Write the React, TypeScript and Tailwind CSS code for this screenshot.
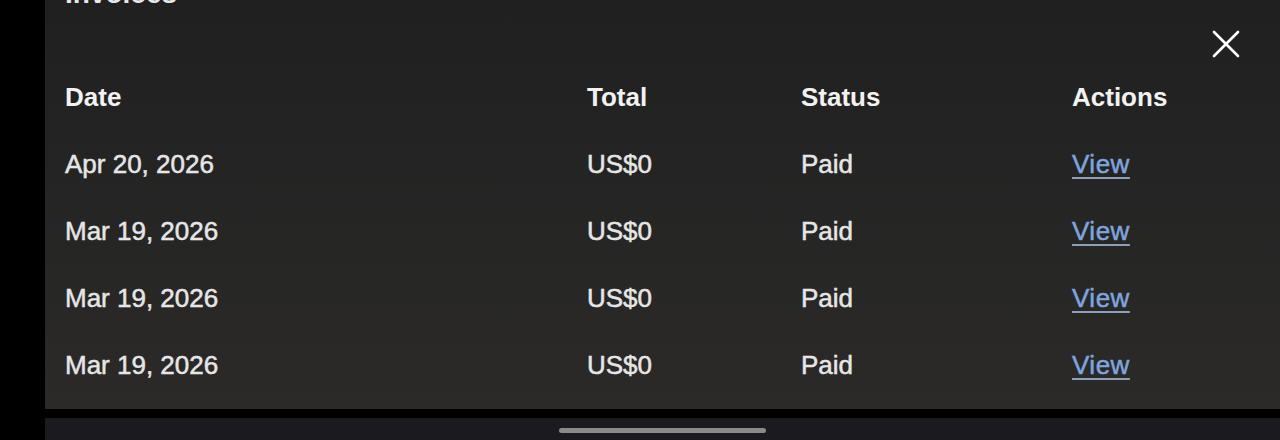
import React from 'react';

type Invoice = {
  date: string;
  total: string;
  status: string;
};

const invoices: Invoice[] = [
  { date: 'Apr 20, 2026', total: 'US$0', status: 'Paid' },
  { date: 'Mar 19, 2026', total: 'US$0', status: 'Paid' },
  { date: 'Mar 19, 2026', total: 'US$0', status: 'Paid' },
  { date: 'Mar 19, 2026', total: 'US$0', status: 'Paid' },
];

const CloseIcon = () => (
  <svg width="28" height="28" viewBox="0 0 28 28" fill="none" stroke="currentColor" strokeWidth="2.6" strokeLinecap="round">
    <path d="M2 2L26 26M26 2L2 26" />
  </svg>
);

const row = 'grid grid-cols-[522px_214px_271px_1fr] items-center h-[67px]';

const App: React.FC = () => {
  return (
    <div className="flex w-[1280px] h-[440px] bg-black overflow-hidden font-['Liberation_Sans',Arial,sans-serif]">
      <div className="w-[45px] shrink-0" />
      <div className="flex flex-col flex-1">
        {/* invoices sheet */}
        <div className="relative h-[409px] overflow-hidden bg-gradient-to-b from-[#202020] to-[#2b2a29] pl-[20px]">
          <h2 className="-mt-[20px] text-[28px] leading-[28px] font-bold text-[#e8e8e8]">Invoices</h2>
          <button className="absolute top-[30px] right-[40px] text-white">
            <CloseIcon />
          </button>

          <div className="mt-[56px]">
            <div className={`${row} text-[26px] font-bold text-[#f2f2f2]`}>
              <span>Date</span>
              <span>Total</span>
              <span>Status</span>
              <span>Actions</span>
            </div>
            {invoices.map((inv, i) => (
              <div key={i} className={`${row} text-[26px] text-[#e6e6e6] [-webkit-text-stroke:0.5px_#e6e6e6]`}>
                <span>{inv.date}</span>
                <span>{inv.total}</span>
                <span>{inv.status}</span>
                <span>
                  <a className="text-[#7fa4de] [-webkit-text-stroke:0.5px_#7fa4de] tracking-[0.5px] underline decoration-[#8e9fb8] decoration-2 underline-offset-[4px]">
                    View
                  </a>
                </span>
              </div>
            ))}
          </div>
        </div>

        {/* system navigation bar */}
        <div className="mt-[9px] flex-1 bg-[#1b1b1f] flex items-center justify-center">
          <div className="w-[207px] h-[5px] rounded-full bg-[#8a8a8a] mt-[3px]" />
        </div>
      </div>
    </div>
  );
};

export default App;
